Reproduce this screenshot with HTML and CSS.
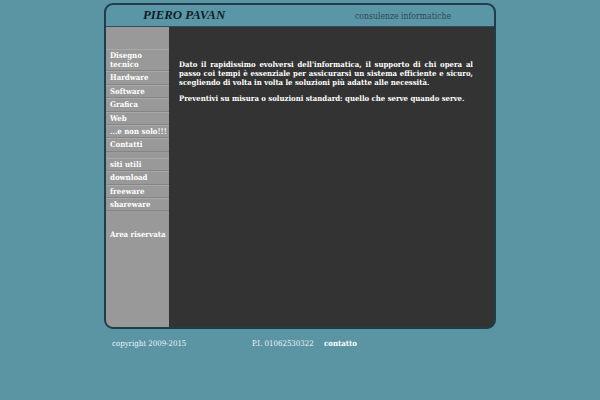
FILE: index.html
```html
<!DOCTYPE html>
<html>
<head>
<meta charset="utf-8">
<link rel="stylesheet" href="styles.css">
</head>
<body>
<div class="page">
  <div class="box">
    <div class="header">
      <div class="brand">PIERO PAVAN</div>
      <div class="tagline">consulenze informatiche</div>
    </div>
    <div class="main">
      <div class="sidebar">
        <ul class="menu">
          <li>Disegno tecnico</li>
          <li>Hardware</li>
          <li>Software</li>
          <li>Grafica</li>
          <li>Web</li>
          <li>...e non solo!!!</li>
          <li>Contatti</li>
        </ul>
        <ul class="menu menu2">
          <li>siti utili</li>
          <li>download</li>
          <li>freeware</li>
          <li>shareware</li>
        </ul>
        <div class="reserved">Area riservata</div>
      </div>
      <div class="content">
        <p>Dato il rapidissimo evolversi dell'informatica, il supporto di chi opera al passo coi tempi è essenziale per assicurarsi un sistema efficiente e sicuro, scegliendo di volta in volta le soluzioni più adatte alle necessità.</p>
        <p>Preventivi su misura o soluzioni standard: quello che serve quando serve.</p>
      </div>
    </div>
  </div>
  <div class="footer">
    <span class="copy">copyright 2009-2015</span>
    <span class="piva">P.I. 01062530322</span>
    <span class="contact">contatto</span>
  </div>
</div>
</body>
</html>
```
FILE: styles.css
```css
html, body {
  margin: 0;
  padding: 0;
  background: #5b95a3;
}
body {
  font-family: "DejaVu Serif Condensed", "DejaVu Serif", serif;
  font-stretch: condensed;
}
.page {
  padding: 3px 0 0 104px;
}
.box {
  width: 388px;
  height: 322px;
  border: 2px solid #1f3d4a;
  border-radius: 9px;
  overflow: hidden;
  display: flex;
  flex-direction: column;
  background: #333333;
}
.header {
  box-sizing: border-box;
  height: 22px;
  padding-top: 3px;
  background: #5a96a5;
  border-bottom: 1px solid #2c4d5a;
  display: flex;
  align-items: baseline;
}
.brand {
  font-family: "Liberation Serif", serif;
  font-stretch: normal;
  font-weight: bold;
  font-style: italic;
  font-size: 12.8px;
  line-height: 15px;
  color: #0e1e2a;
  margin-left: 37px;
  width: 212px;
}
.tagline {
  font-size: 8.6px;
  color: #2f4a58;
}
.main {
  flex: 1;
  display: flex;
}
.sidebar {
  width: 63px;
  background: #999999;
  padding-top: 22px;
}
.menu {
  list-style: none;
  margin: 0;
  padding: 0;
}
.menu li {
  font-size: 7.8px;
  font-weight: bold;
  color: #ffffff;
  line-height: 9px;
  padding: 1px 0 1.4px 4px;
  border-bottom: 1px solid #858585;
  border-top: 1px solid #a9a9a9;
}
.menu2 {
  margin-top: 6px;
}
.reserved {
  font-size: 7.8px;
  font-weight: bold;
  color: #ffffff;
  padding: 19px 0 0 4px;
}
.content {
  flex: 1;
  padding: 33px 21px 0 10px;
  color: #ffffff;
  font-size: 7.7px;
  font-weight: bold;
  line-height: 9px;
  text-align: justify;
}
.content p {
  margin: 0 0 7px 0;
}
.footer {
  display: flex;
  font-size: 7.8px;
  color: #eef4f6;
  padding: 10px 0 0 8px;
}
.copy { width: 140px; }
.piva { width: 72px; }
.contact { font-weight: bold; color: #ffffff; }
```
